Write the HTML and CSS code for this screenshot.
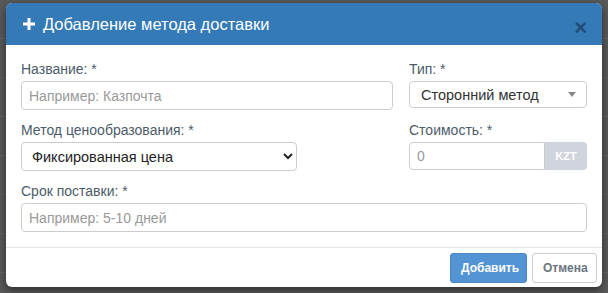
FILE: index.html
```html
<!DOCTYPE html>
<html lang="ru">
<head>
    <meta charset="UTF-8">
    <meta name="viewport" content="width=device-width, initial-scale=1.0">
    <title>Добавление метода доставки</title>
    <link rel="stylesheet" href="styles.css">
</head>
<body>
    <div class="modal">
        <div class="modal-header">
            <h4 class="modal-title">
                <svg class="icon-plus" width="12" height="12" viewBox="0 0 12 12">
                    <rect x="4.5" y="0" width="3" height="12" fill="#fff"/>
                    <rect x="0" y="4.5" width="12" height="3" fill="#fff"/>
                </svg>
                Добавление метода доставки
            </h4>
            <button class="close" type="button">&times;</button>
        </div>

        <div class="modal-body">
            <div class="row">
                <div class="form-group">
                    <label for="name">Название: *</label>
                    <input type="text" id="name" class="form-control" placeholder="Например: Казпочта">
                </div>
                <div class="form-group">
                    <label>Тип: *</label>
                    <div class="fake-select">
                        <span>Сторонний метод</span>
                        <span class="caret"></span>
                    </div>
                </div>
            </div>

            <div class="row">
                <div class="form-group">
                    <label for="pricing">Метод ценообразования: *</label>
                    <select id="pricing" class="form-control pricing">
                        <option>Фиксированная цена</option>
                        <option>По весу</option>
                    </select>
                </div>
                <div class="form-group">
                    <label for="cost">Стоимость: *</label>
                    <div class="input-group">
                        <input type="number" id="cost" class="form-control" placeholder="0">
                        <span class="addon">KZT</span>
                    </div>
                </div>
            </div>

            <div class="form-group">
                <label for="term">Срок поставки: *</label>
                <input type="text" id="term" class="form-control" placeholder="Например: 5-10 дней">
            </div>
        </div>

        <div class="modal-footer">
            <button class="btn btn-primary" type="button">Добавить</button>
            <button class="btn btn-default" type="button">Отмена</button>
        </div>
    </div>
</body>
</html>
```

FILE: styles.css
```css
body {
    margin: 0;
    font-family: "Liberation Sans", Arial, sans-serif;
    background-color: #595959;
    background-image: repeating-linear-gradient(180deg, transparent 0, transparent 38px, #656565 38px, #656565 39px);
    height: 293px;
    overflow: hidden;
}

.modal {
    margin: 3px 6px 0 6px;
    width: 596px;
    background-color: #fff;
    border-radius: 6px;
    box-shadow: 0 3px 9px rgba(0, 0, 0, 0.5);
    overflow: hidden;
}

.modal-header {
    height: 42px;
    background-color: #337ab7;
    display: flex;
    align-items: center;
    justify-content: space-between;
    padding: 0 15px 0 17px;
}

.modal-title {
    margin: 0;
    color: #fff;
    font-size: 16.5px;
    font-weight: normal;
    display: flex;
    align-items: center;
    gap: 8px;
}

.close {
    border: none;
    background: none;
    padding: 0;
    margin-top: 7px;
    font-family: "Liberation Sans", Arial, sans-serif;
    font-size: 22px;
    font-weight: bold;
    line-height: 1;
    color: rgba(0, 0, 0, 0.4);
    cursor: pointer;
}

.modal-body {
    padding: 15px 15px 15px 15px;
}

.row {
    display: grid;
    grid-template-columns: 372px 178px;
    column-gap: 16px;
}

.form-group {
    margin-bottom: 11px;
}

.modal-body > .form-group {
    margin-bottom: 0;
}

label {
    display: block;
    font-size: 14px;
    line-height: 18px;
    color: #4d5b69;
    margin-bottom: 3px;
}

.form-control {
    display: block;
    box-sizing: border-box;
    width: 100%;
    height: 29px;
    padding: 4px 7px;
    border: 1px solid #ccc;
    border-radius: 4px;
    font-family: "Liberation Sans", Arial, sans-serif;
    font-size: 14px;
    color: #333;
    background-color: #fff;
}

.form-control::placeholder {
    color: #999;
}

.pricing {
    width: 276px;
    padding-left: 6px;
    font-size: 14.5px;
    color: #222;
}

.fake-select {
    box-sizing: border-box;
    height: 27px;
    border: 1px solid #ccc;
    border-radius: 4px;
    display: flex;
    align-items: center;
    justify-content: space-between;
    padding: 0 10px 0 11px;
    font-size: 14.5px;
    color: #333;
}

.caret {
    width: 0;
    height: 0;
    border-left: 4px solid transparent;
    border-right: 4px solid transparent;
    border-top: 5px solid #888;
}

.input-group {
    display: flex;
    height: 28px;
}

.input-group .form-control {
    height: 28px;
    border-radius: 4px 0 0 4px;
    flex: 1;
    min-width: 0;
}

.addon {
    width: 42px;
    display: flex;
    align-items: center;
    justify-content: center;
    background-color: #d0d5dd;
    color: #fff;
    font-size: 11px;
    font-weight: bold;
    border-radius: 0 4px 4px 0;
}

.modal-footer {
    border-top: 1px solid #e5e5e5;
    padding: 5px 5px 4px 0;
    display: flex;
    justify-content: flex-end;
    gap: 5px;
}

.btn {
    height: 30px;
    padding: 0 10px;
    border-radius: 3px;
    font-family: "Liberation Sans", Arial, sans-serif;
    font-size: 12px;
    font-weight: bold;
    cursor: pointer;
}

.btn-primary {
    width: 77px;
    background-color: #5294d4;
    border: 1px solid #4a87c2;
    color: #fff;
}

.btn-default {
    width: 65px;
    background-color: #fff;
    border: 1px solid #ccc;
    color: #6b7580;
}
```
